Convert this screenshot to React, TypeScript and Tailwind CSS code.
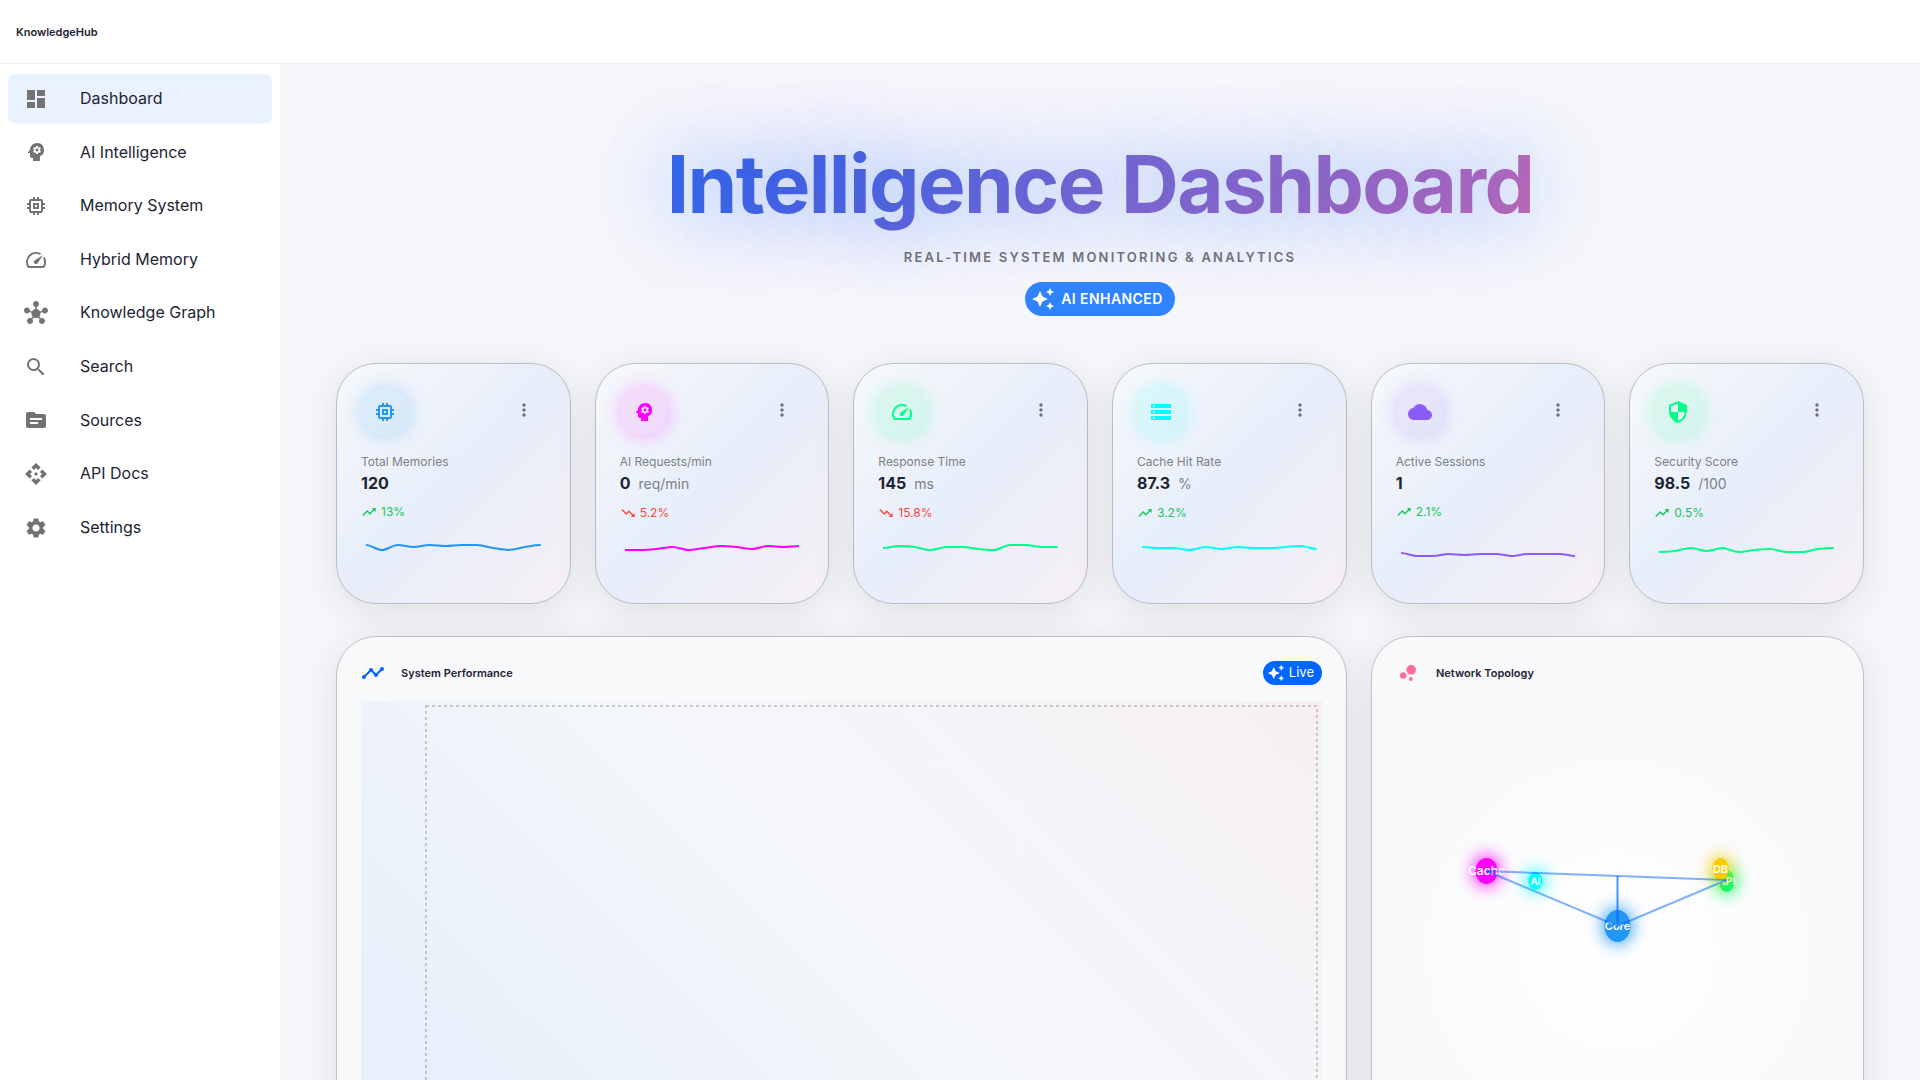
import type { IconType } from "react-icons";
import {
  MdApi,
  MdAutoAwesome,
  MdBubbleChart,
  MdCloud,
  MdDashboard,
  MdHub,
  MdMemory,
  MdMoreVert,
  MdPsychology,
  MdSearch,
  MdSecurity,
  MdSettings,
  MdSource,
  MdSpeed,
  MdStorage,
  MdTimeline,
  MdTrendingDown,
  MdTrendingUp,
} from "react-icons/md";

const navItems: { label: string; icon: IconType }[] = [
  { label: "Dashboard", icon: MdDashboard },
  { label: "AI Intelligence", icon: MdPsychology },
  { label: "Memory System", icon: MdMemory },
  { label: "Hybrid Memory", icon: MdSpeed },
  { label: "Knowledge Graph", icon: MdHub },
  { label: "Search", icon: MdSearch },
  { label: "Sources", icon: MdSource },
  { label: "API Docs", icon: MdApi },
  { label: "Settings", icon: MdSettings },
];

type Metric = {
  label: string;
  value: string;
  unit?: string;
  trend: string;
  up: boolean;
  icon: IconType;
  badge: string;
  color: string;
  points: number[];
};

const metrics: Metric[] = [
  {
    label: "Total Memories",
    value: "120",
    trend: "13%",
    up: true,
    icon: MdMemory,
    badge: "text-[#2196f3] bg-[#2196f3]/10 shadow-[0_0_20px_rgba(33,150,243,0.3)]",
    color: "#2196f3",
    points: [13, 18, 13, 15, 13, 14, 13, 13, 16, 18, 15, 13],
  },
  {
    label: "AI Requests/min",
    value: "0",
    unit: "req/min",
    trend: "5.2%",
    up: false,
    icon: MdPsychology,
    badge: "text-[#ff00ff] bg-[#ff00ff]/10 shadow-[0_0_20px_rgba(255,0,255,0.3)]",
    color: "#ff00ff",
    points: [17, 17, 16, 14, 17, 15, 13, 14, 16, 13, 14, 13],
  },
  {
    label: "Response Time",
    value: "145",
    unit: "ms",
    trend: "15.8%",
    up: false,
    icon: MdSpeed,
    badge: "text-[#00ff88] bg-[#00ff88]/10 shadow-[0_0_20px_rgba(0,255,136,0.3)]",
    color: "#00ff88",
    points: [15, 13, 14, 17, 14, 14, 16, 17, 12, 12, 14, 14],
  },
  {
    label: "Cache Hit Rate",
    value: "87.3",
    unit: "%",
    trend: "3.2%",
    up: true,
    icon: MdStorage,
    badge: "text-[#00ffff] bg-[#00ffff]/10 shadow-[0_0_20px_rgba(0,255,255,0.3)]",
    color: "#00ffff",
    points: [14, 15, 15, 17, 14, 16, 14, 15, 15, 14, 13, 16],
  },
  {
    label: "Active Sessions",
    value: "1",
    trend: "2.1%",
    up: true,
    icon: MdCloud,
    badge: "text-[#8b5cf6] bg-[#8b5cf6]/10 shadow-[0_0_20px_rgba(139,92,246,0.3)]",
    color: "#8b5cf6",
    points: [21, 24, 24, 22, 23, 22, 22, 24, 22, 22, 22, 24],
  },
  {
    label: "Security Score",
    value: "98.5",
    unit: "/100",
    trend: "0.5%",
    up: true,
    icon: MdSecurity,
    badge: "text-[#00ff88] bg-[#00ff88]/10 shadow-[0_0_20px_rgba(0,255,136,0.3)]",
    color: "#00ff88",
    points: [19, 18, 15, 18, 15, 19, 17, 16, 19, 19, 16, 15],
  },
];

/* Monotone cubic curve through evenly spaced samples. */
function curve(points: number[], width: number) {
  const step = width / (points.length - 1);
  const slope = points.map((_, i) => {
    if (i === 0 || i === points.length - 1) return 0;
    const a = points[i] - points[i - 1];
    const b = points[i + 1] - points[i];
    return a * b <= 0 ? 0 : (a + b) / 2;
  });
  let d = `M0 ${points[0]}`;
  for (let i = 1; i < points.length; i++) {
    const x0 = (i - 1) * step;
    const x1 = i * step;
    d += `C${x0 + step / 3} ${points[i - 1] + slope[i - 1] / 3} ${x1 - step / 3} ${points[i] - slope[i] / 3} ${x1} ${points[i]}`;
  }
  return d;
}

function MetricCard({ metric }: { metric: Metric }) {
  const Icon = metric.icon;
  const Trend = metric.up ? MdTrendingUp : MdTrendingDown;
  return (
    <article className="min-w-0 rounded-[40px] border border-[#b9bcc3] bg-[linear-gradient(135deg,#f7f9fb_0%,#e7eefa_50%,#f6eff4_100%)] p-6 shadow-[0_8px_40px_rgba(0,0,0,0.1)]">
      <div className="flex items-start justify-between">
        <div className={`flex size-12 items-center justify-center rounded-full ${metric.badge}`}>
          <Icon className="size-6" />
        </div>
        <button
          type="button"
          aria-label={`${metric.label} options`}
          className="flex size-11 items-center justify-center rounded-full text-[#6f7278]"
        >
          <MdMoreVert className="size-5" />
        </button>
      </div>
      <h2 className="mt-4 text-xs leading-5 text-[#7b7f89]">{metric.label}</h2>
      <p className="flex items-baseline gap-2 leading-[22px]">
        <span className="text-base leading-[22px] font-bold text-[#1d2433]">{metric.value}</span>
        {metric.unit && <span className="text-sm leading-[22px] text-[#7b7f89]">{metric.unit}</span>}
      </p>
      <p
        className={
          metric.up
            ? "mt-2 flex items-center gap-1 text-xs leading-5 text-[#16c65c]"
            : "mt-2 flex items-center gap-1 text-xs leading-5 text-[#f4493c]"
        }
      >
        <Trend className="size-4" />
        {metric.trend}
      </p>
      <svg
        className="mt-2.5 block h-[46px] w-full px-[5px]"
        viewBox="0 0 174 46"
        preserveAspectRatio="none"
        aria-hidden="true"
      >
        <path
          d={curve(metric.points, 174)}
          fill="none"
          stroke={metric.color}
          strokeWidth="2"
          vectorEffect="non-scaling-stroke"
        />
      </svg>
    </article>
  );
}

const nodes = [
  { name: "API", x: 330, y: 180, rx: 8, ry: 11, fill: "#00ff66", size: 11 },
  { name: "DB", x: 324, y: 168, rx: 8, ry: 11, fill: "#ffcc00", size: 11 },
  { name: "AI", x: 139, y: 180, rx: 7, ry: 9, fill: "#00ffff", size: 10 },
  { name: "Cache", x: 90, y: 170, rx: 11, ry: 13, fill: "#ff00ff", size: 12 },
  { name: "Core", x: 221, y: 225, rx: 13, ry: 16, fill: "#2196f3", size: 11 },
];

function Topology() {
  return (
    <svg className="block h-[500px] w-full overflow-visible" viewBox="0 0 442 500" role="img" aria-label="Network topology">
      <defs>
        <filter id="glow" x="-200%" y="-200%" width="500%" height="500%">
          <feGaussianBlur stdDeviation="8" />
        </filter>
      </defs>
      {nodes.map((n) => (
        <g key={n.name}>
          <ellipse cx={n.x} cy={n.y} rx={n.rx + 3} ry={n.ry + 3} fill={n.fill} opacity="0.8" filter="url(#glow)" />
          <ellipse cx={n.x} cy={n.y} rx={n.rx} ry={n.ry} fill={n.fill} />
          <text x={n.x} y={n.y + 4} textAnchor="middle" fontSize={n.size} fontWeight="600" fill="#ffffff">
            {n.name}
          </text>
        </g>
      ))}
      <g stroke="#0066ff" strokeWidth="2" fill="none">
        <path d="M90 170L330 179" opacity="0.5" />
        <path d="M90 170L221 225" opacity="0.5" />
        <path d="M330 179L221 225" opacity="0.5" />
        <path d="M221 175V225" opacity="0.7" />
      </g>
    </svg>
  );
}

export default function App() {
  return (
    <div className="flex h-screen flex-col bg-[#f6f7fb] font-[Inter,sans-serif] text-[#1d2433]">
      <header className="flex h-16 shrink-0 items-center border-b border-[#eeeff1] bg-white px-4 pt-0.5">
        <span className="text-[11px] font-semibold">KnowledgeHub</span>
      </header>

      <div className="flex min-h-0 flex-1">
        <nav className="w-[280px] shrink-0 bg-white px-2 pt-2.5">
          <ul className="flex flex-col gap-1">
            {navItems.map(({ label, icon: Icon }, i) => (
              <li key={label}>
                <a
                  href="#"
                  aria-current={i === 0 ? "page" : undefined}
                  className={
                    i === 0
                      ? "flex items-center gap-8 rounded-lg bg-[#eaf2ff] px-4 py-3 leading-[1.6]"
                      : "flex items-center gap-8 rounded-lg px-4 py-3 leading-[1.6]"
                  }
                >
                  <Icon className="size-6 text-[#737373]" />
                  {label}
                </a>
              </li>
            ))}
          </ul>
        </nav>

        <main className="min-w-0 flex-1 overflow-y-auto px-14 pt-[76px] [scrollbar-width:none]">
          <section className="flex flex-col items-center">
            <h1 className="w-full bg-[linear-gradient(135deg,#0066ff_0%,#ff6b9d_100%)] bg-clip-text pb-2 text-center text-[80px] leading-[88px] font-bold tracking-[-0.02em] text-transparent [text-shadow:0_0_80px_rgba(0,102,255,0.5)]">
              Intelligence Dashboard
            </h1>
            <p className="mt-[9px] text-[13px] leading-6 font-semibold tracking-[0.17em] text-[#6d717c]">
              REAL-TIME SYSTEM MONITORING &amp; ANALYTICS
            </p>
            <span className="mt-[13px] flex h-[34px] items-center gap-1.5 rounded-full bg-[#2f83ff] pr-3 pl-1.5 text-sm font-semibold tracking-[0.03em] text-white">
              <MdAutoAwesome className="size-6" />
              AI ENHANCED
            </span>
          </section>

          <section className="mt-[47px] grid grid-cols-6 gap-6">
            {metrics.map((m) => (
              <MetricCard key={m.label} metric={m} />
            ))}
          </section>

          <section className="mt-8 grid grid-cols-[minmax(0,1011fr)_minmax(0,493fr)] gap-6 pb-14">
            <article className="rounded-[40px] border border-[#bfc1c4] bg-[#f8f9fb] p-6 shadow-[0_8px_40px_rgba(0,0,0,0.1)]">
              <div className="flex h-6 items-center">
                <MdTimeline className="size-6 text-[#0066ff]" />
                <h2 className="ml-4 text-[11px] leading-4 font-semibold">System Performance</h2>
                <span className="ml-auto flex h-6 items-center gap-1 rounded-full bg-[#0066ff] pr-2 pl-1 text-[13px] text-white">
                  <MdAutoAwesome className="size-[18px]" />
                  Live
                </span>
              </div>
              <div className="mt-4 h-[500px] bg-[linear-gradient(45deg,#e6effc_0%,#e8f0fb_15%,#f5f7fa_55%,#f6f0f4_100%)] pt-[5px] pr-[5px] pb-8 pl-[65px]">
                <svg className="block size-full overflow-visible" aria-label="System performance chart">
                  <rect
                    x="0"
                    y="0"
                    width="100%"
                    height="100%"
                    fill="none"
                    stroke="#000000"
                    strokeOpacity="0.18"
                    strokeWidth="2"
                    strokeDasharray="3 3"
                  />
                </svg>
              </div>
            </article>

            <article className="rounded-[40px] border border-[#bfc1c4] bg-[#f8f9fb] p-6 shadow-[0_8px_40px_rgba(0,0,0,0.1)]">
              <div className="flex h-6 items-center">
                <MdBubbleChart className="size-6 text-[#ff6b9d]" />
                <h2 className="ml-4 text-[11px] leading-4 font-semibold">Network Topology</h2>
              </div>
              <div className="mt-4 bg-[radial-gradient(circle,#ffffff_0%,#f8f9fb_70%)]">
                <Topology />
              </div>
            </article>
          </section>
        </main>
      </div>
    </div>
  );
}
